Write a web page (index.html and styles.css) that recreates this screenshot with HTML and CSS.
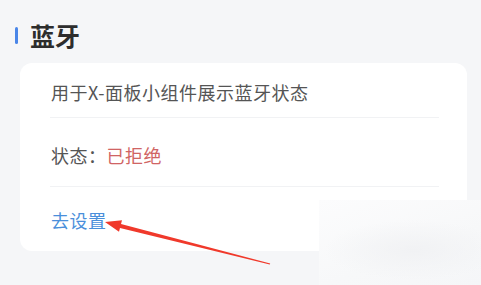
FILE: index.html
```html
<!DOCTYPE html>
<html lang="zh">
 <head>
   <meta charset="UTF-8">
   <meta name="viewport" content="width=device-width, initial-scale=1.0">
   <title>蓝牙</title>
   <link rel="stylesheet" href="styles.css">
 </head>
 <body>
   <div class="page">
     <h2 class="section-title">蓝牙</h2>

     <div class="card">
       <div class="row row-desc">用于X-面板小组件展示蓝牙状态</div>
       <div class="row row-status">状态：<span class="status-denied">已拒绝</span></div>
       <div class="row row-action"><a class="action-link" href="#">去设置</a></div>
     </div>
   </div>

   <!-- blurred patch in the lower right corner of the shot -->
   <div class="blur-patch"></div>

   <!-- red pointer arrow -->
   <svg class="pointer" width="481" height="285" viewBox="0 0 481 285">
     <polygon fill="#f0392b" points="105,222 122,220.2 121,224.1 270.2,263.4 269.8,264.6 120,227.9 119,231.8"/>
   </svg>
 </body>
</html>
```

FILE: styles.css
```css
  body {
      font-family: "Noto Sans CJK SC", "Noto Sans", sans-serif;
      margin: 0;
      padding: 0;
      background-color: #f5f6f8;
      width: 481px;
      height: 285px;
      overflow: hidden;
      position: relative;
  }

  .page {
      padding: 19px 14px 0 20px;
  }

  /* Section heading with the blue bar */
  .section-title {
      margin: 0 0 12px -5px;
      font-size: 25px;
      line-height: 32px;
      font-weight: bold;
      color: #2d2d2d;
      display: flex;
      align-items: center;
      gap: 12px;
  }

  .section-title::before {
      content: "";
      width: 3px;
      height: 17px;
      border-radius: 2px;
      background-color: #4a86e8;
  }

  /* White card */
  .card {
      background-color: #ffffff;
      border-radius: 12px;
      height: 188px;
  }

  .row {
      margin: 0 28px 0 30px;
      font-size: 18px;
      letter-spacing: 0.5px;
      line-height: 24px;
      color: #555555;
      padding-left: 1px;
  }

  .row-desc {
      padding-top: 17px;
      padding-bottom: 13px;
      border-bottom: 1px solid #f1f2f4;
  }

  .row-status {
      padding-top: 25px;
      padding-bottom: 19px;
      border-bottom: 1px solid #f1f2f4;
  }

  .status-denied {
      color: #d06464;
  }

  .row-action {
      padding-top: 21px;
  }

  .action-link {
      color: #4a8fdb;
      text-decoration: none;
  }

  .blur-patch {
      position: absolute;
      left: 319px;
      top: 200px;
      right: 0;
      bottom: 0;
      background:
        radial-gradient(ellipse 90px 30px at 95px 50px, #f1f2f4, rgba(241, 242, 244, 0)),
        linear-gradient(160deg, #fcfcfd 0%, #f7f8f9 60%, #f5f6f8 100%);
  }

  .pointer {
      position: absolute;
      left: 0;
      top: 0;
  }
```
